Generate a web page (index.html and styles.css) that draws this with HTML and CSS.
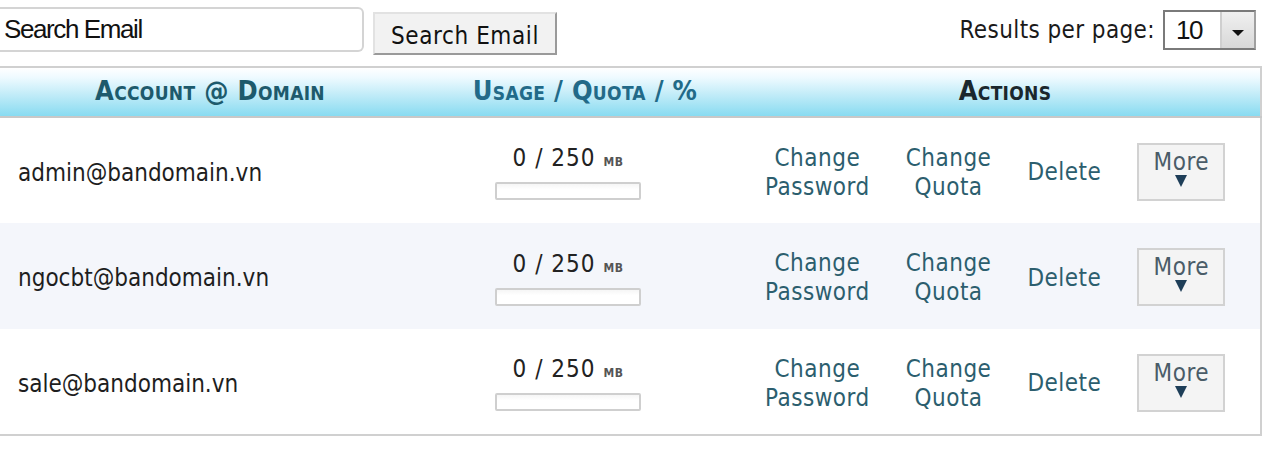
FILE: index.html
```html
<!DOCTYPE html>
<html>
<head>
<meta charset="utf-8">
<link rel="stylesheet" href="styles.css">
</head>
<body>
<div class="toolbar">
  <div class="search">
    <input class="search-input" type="text" value="Search Email">
    <button class="search-btn">Search Email</button>
  </div>
  <div class="perpage">
    <span class="perpage-label">Results per page:</span>
    <div class="select"><span class="select-val">10</span><span class="select-arrow"><svg width="14" height="8" viewBox="0 0 14 8"><path d="M1 1h12L7 7z" fill="#111"/></svg></span></div>
  </div>
</div>
<table class="grid">
  <colgroup><col class="c1"><col class="c2"><col class="c3"></colgroup>
  <thead>
    <tr>
      <th class="h-acc">Account @ Domain</th>
      <th class="h-use">Usage / Quota / %</th>
      <th class="h-act">Actions</th>
    </tr>
  </thead>
  <tbody>
    <tr>
      <td class="email">admin@bandomain.vn</td>
      <td><div class="usage"><div class="usage-txt">0 / 250 <span class="mb">MB</span></div><div class="bar"></div></div></td>
      <td><div class="actions"><a class="act">Change<br>Password</a><a class="act">Change<br>Quota</a><a class="act">Delete</a><button class="more"><span>More</span><svg class="tri" width="12" height="12" viewBox="0 0 12 12"><path d="M0 0h12L6 12z" fill="#1e3e58"/></svg></button></div></td>
    </tr>
    <tr class="alt">
      <td class="email">ngocbt@bandomain.vn</td>
      <td><div class="usage"><div class="usage-txt">0 / 250 <span class="mb">MB</span></div><div class="bar"></div></div></td>
      <td><div class="actions"><a class="act">Change<br>Password</a><a class="act">Change<br>Quota</a><a class="act">Delete</a><button class="more"><span>More</span><svg class="tri" width="12" height="12" viewBox="0 0 12 12"><path d="M0 0h12L6 12z" fill="#1e3e58"/></svg></button></div></td>
    </tr>
    <tr>
      <td class="email">sale@bandomain.vn</td>
      <td><div class="usage"><div class="usage-txt">0 / 250 <span class="mb">MB</span></div><div class="bar"></div></div></td>
      <td><div class="actions"><a class="act">Change<br>Password</a><a class="act">Change<br>Quota</a><a class="act">Delete</a><button class="more"><span>More</span><svg class="tri" width="12" height="12" viewBox="0 0 12 12"><path d="M0 0h12L6 12z" fill="#1e3e58"/></svg></button></div></td>
    </tr>
  </tbody>
</table>
</body>
</html>
```
FILE: styles.css
```css
* { box-sizing: border-box; }
body {
  margin: 0;
  background: #fff;
  font-family: "DejaVu Sans Condensed", "DejaVu Sans", sans-serif;
  font-size: 24px;
  color: #222;
}
.toolbar {
  display: flex;
  justify-content: space-between;
  align-items: flex-start;
  height: 66px;
  padding-right: 24px;
}
.search { display: flex; align-items: flex-start; }
.search-input {
  margin: 7px 0 0 0;
  width: 364px;
  height: 45px;
  border: 2px solid #d4d4d4;
  border-left: none;
  border-radius: 0 6px 6px 0;
  padding: 0 4px;
  font-family: "Liberation Sans", Arial, sans-serif;
  font-size: 26px;
  letter-spacing: -1.4px;
  color: #111;
  background: #fff;
  outline: none;
}
.search-btn {
  margin: 12px 0 0 9px;
  width: 184px;
  height: 43px;
  background: #f2f2f2;
  border: 2px solid #e2e2e2;
  border-right-color: #9a9a9a;
  border-bottom-color: #9a9a9a;
  font-family: "DejaVu Sans Condensed", "DejaVu Sans", sans-serif;
  font-size: 24px;
  letter-spacing: 0.6px;
  color: #111;
  padding: 4px 0 0 0;
}
.perpage { display: flex; align-items: center; margin-top: 10px; gap: 8px; }
.perpage-label { font-size: 24px; letter-spacing: 0.4px; color: #1a1a1a; }
.select {
  display: flex;
  width: 93px;
  height: 40px;
  border: 2px solid #7a7a7a;
  border-right-color: #a0a0a0;
  background: #fff;
}
.select-val {
  flex: 1;
  font-family: "Liberation Sans", Arial, sans-serif;
  font-size: 26px;
  letter-spacing: -1.5px;
  padding-left: 11px;
  line-height: 36px;
  color: #111;
}
.select-arrow {
  width: 34px;
  background: linear-gradient(#f0f0f0, #d8d8d8);
  border-left: 2px solid #cfcfcf;
  display: flex;
  align-items: center;
  justify-content: center;
  padding-top: 6px;
}
.grid {
  width: 1261px;
  border-collapse: collapse;
  border-top: 2px solid #d0d0d0;
  border-right: 2px solid #d0d0d0;
  border-bottom: 2px solid #d0d0d0;
  table-layout: fixed;
}
.c1 { width: 420px; }
.c2 { width: 330px; }
.c3 { width: 511px; }
thead th {
  height: 50px;
  background: linear-gradient(#ffffff 0%, #eefaff 20%, #c2ecf8 55%, #88dbf1 100%);
  border-bottom: 2px solid #c8c8c8;
  font-weight: bold;
  font-variant: small-caps;
  font-size: 27px;
  letter-spacing: 0.3px;
  text-align: center;
  padding: 0 0 3px 0;
}
.h-acc { color: #1d5a6c; }
.h-use { color: #226a88; }
.h-act { color: #1a272d; }
tbody td { height: 106px; padding: 0; vertical-align: middle; }
tbody tr.alt td { background: #f4f6fb; }
.email { padding-left: 18px !important; font-size: 24px; color: #1e1e1e; padding-top: 4px !important; }
.usage { width: 146px; margin-left: 75px; text-align: center; padding-top: 4px; }
.usage-txt { font-size: 24px; letter-spacing: 1px; color: #222; line-height: 26px; }
.mb { font-size: 12px; font-weight: bold; color: #555; letter-spacing: 0.5px; }
.bar { margin-top: 7px; height: 18px; border: 2px solid #cfcfcf; border-radius: 2px; background: linear-gradient(#f6f6f6, #fff 40%); }
.actions { display: flex; align-items: center; gap: 36px; padding-left: 15px; padding-top: 4px; }
.act { color: #2c5e6e; text-align: center; line-height: 29px; font-size: 24px; letter-spacing: 0.5px; }
.more {
  width: 88px;
  height: 58px;
  margin-top: -2px;
  background: #f4f4f4;
  border: 2px solid #d2d2d2;
  font-family: "DejaVu Sans Condensed", "DejaVu Sans", sans-serif;
  font-size: 24px;
  letter-spacing: 0.5px;
  color: #4a5c68;
  line-height: 22px;
  padding: 0 0 6px 0;
  display: flex;
  flex-direction: column;
  align-items: center;
  justify-content: center;
}
.tri { display: block; margin-top: 2px; }
```
